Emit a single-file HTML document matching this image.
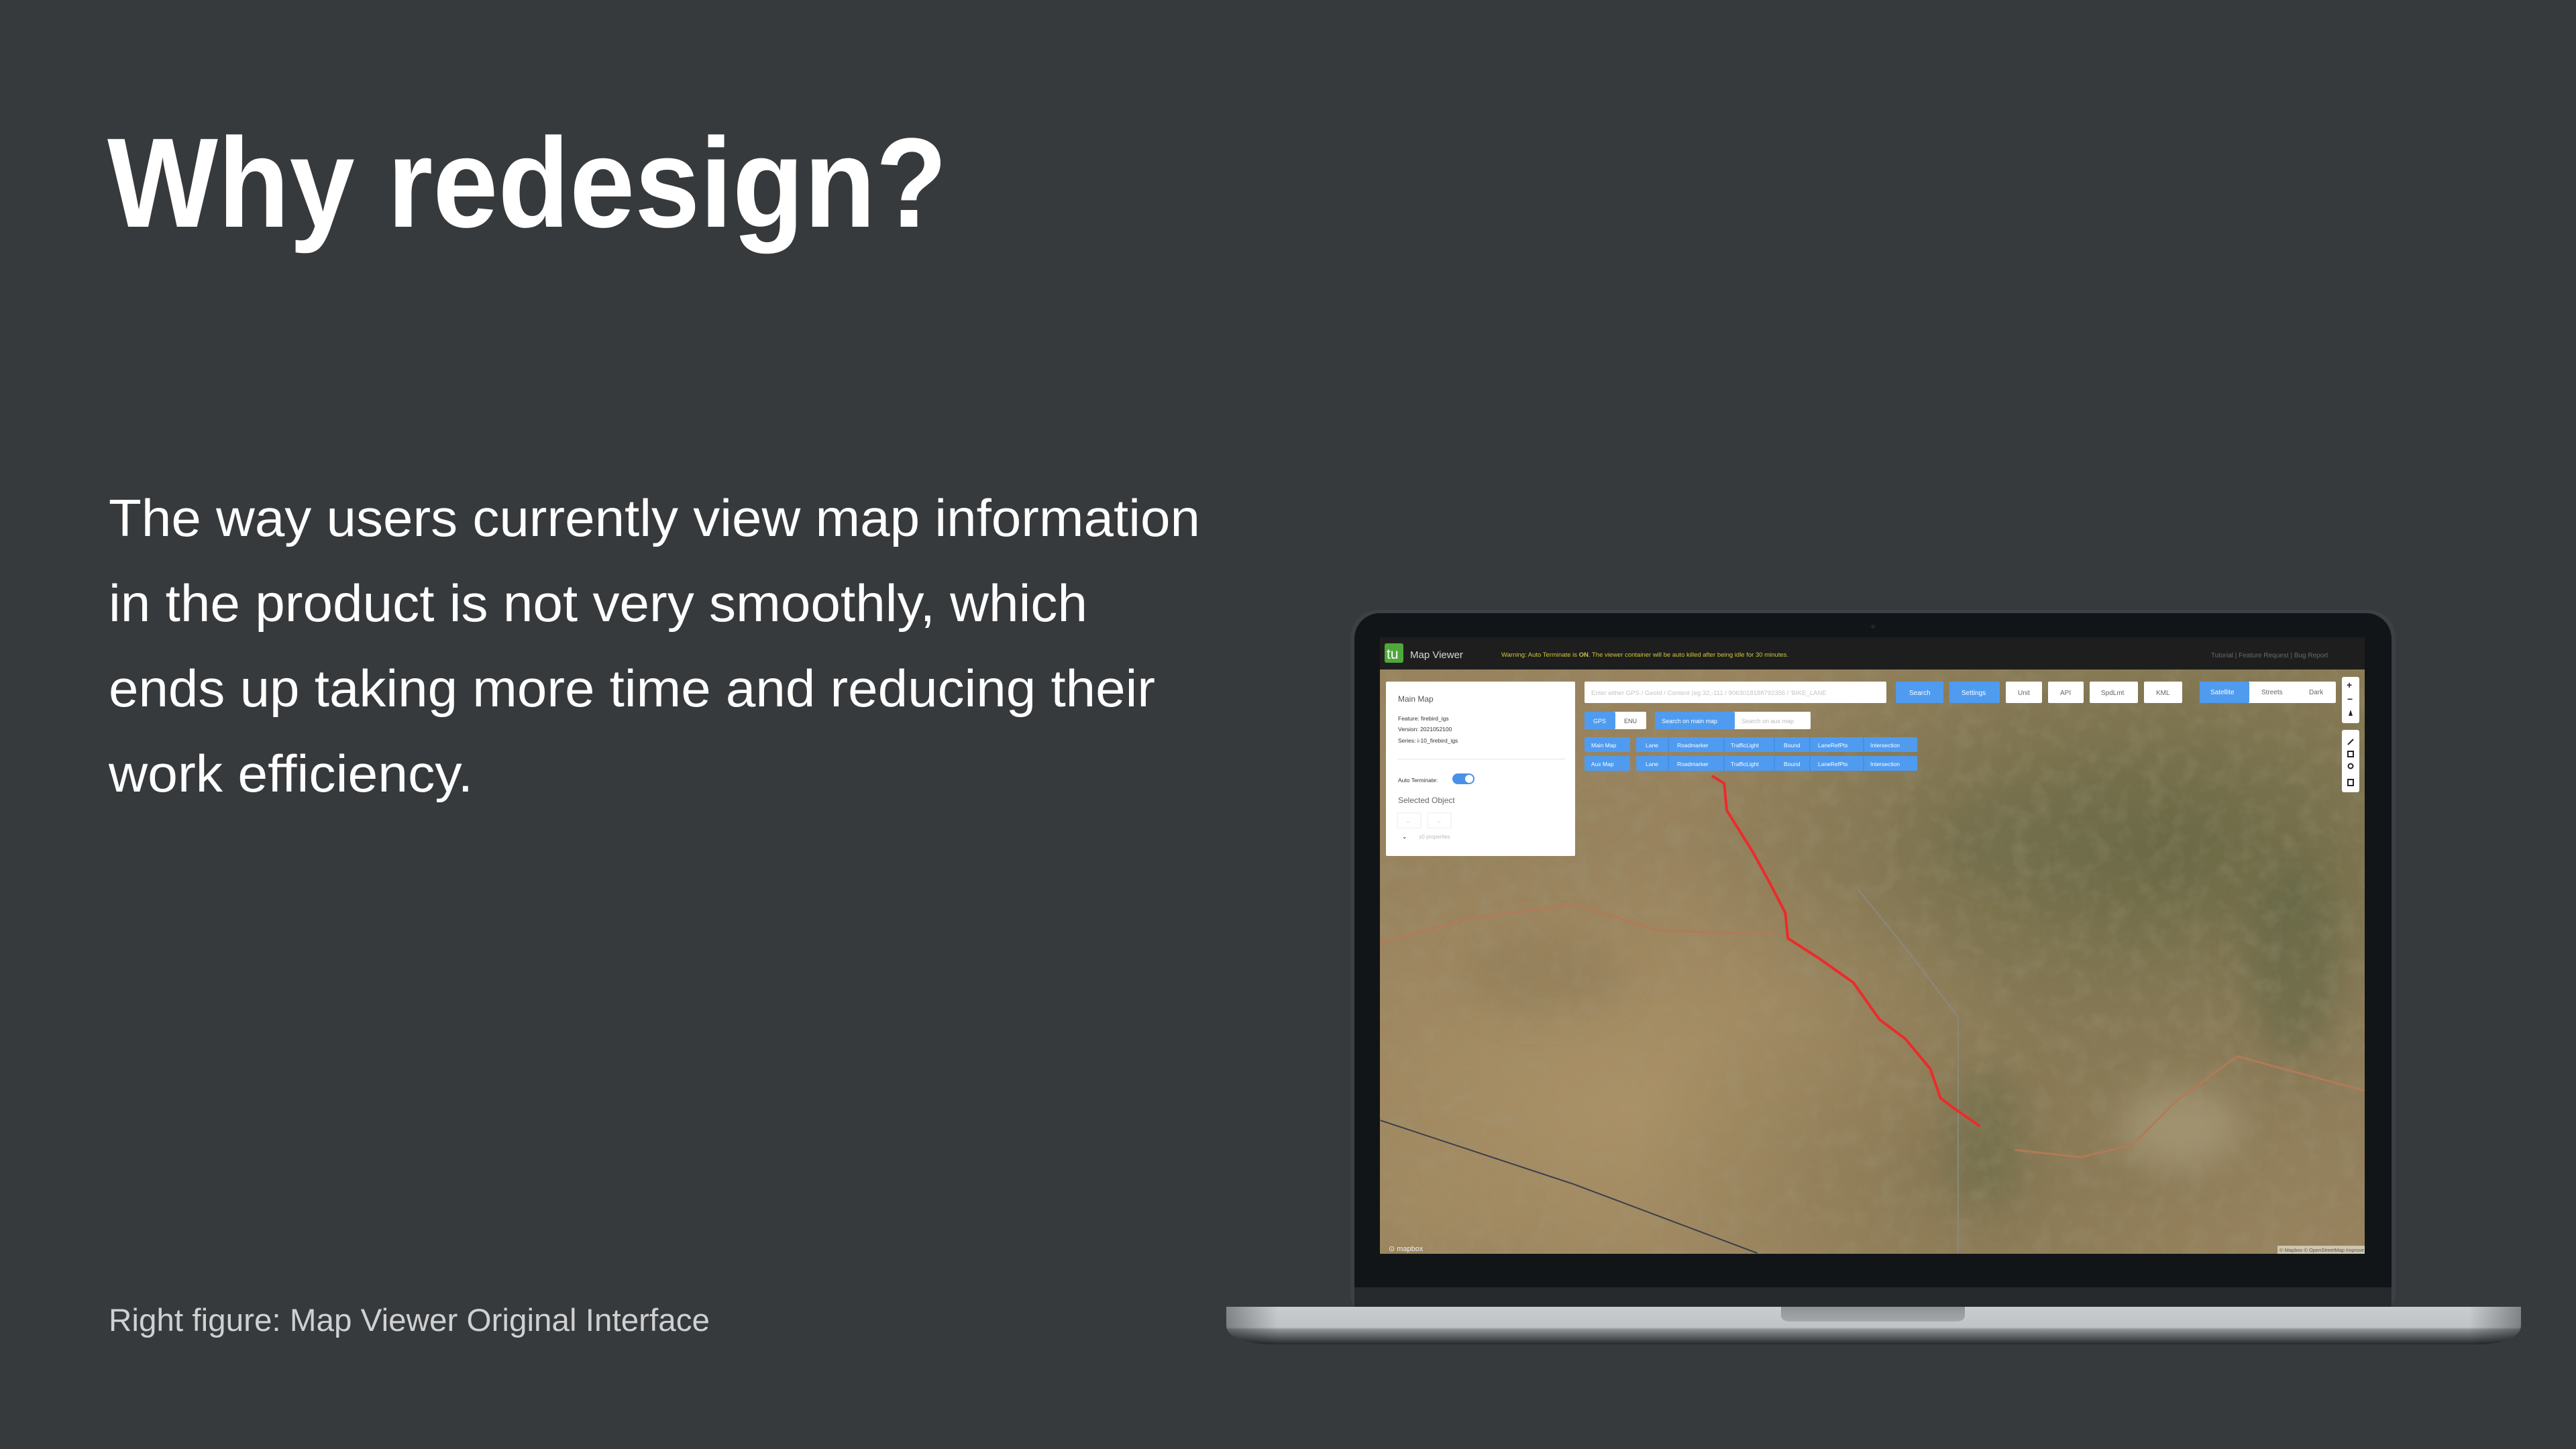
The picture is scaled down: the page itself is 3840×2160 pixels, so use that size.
<!DOCTYPE html>
<html><head><meta charset="utf-8"><style>
html,body{margin:0;padding:0;background:#373a3c;width:3840px;height:2160px;overflow:hidden}
svg{position:absolute;left:0;top:0}
</style></head><body>
<svg width="3840" height="2160" viewBox="0 0 3840 2160" xmlns="http://www.w3.org/2000/svg" font-family="'Liberation Sans', Arial, sans-serif">
<defs>
<linearGradient id="base" x1="0" y1="0" x2="0" y2="1">
<stop offset="0" stop-color="#c9cdd0"/><stop offset="0.55" stop-color="#bfc3c6"/><stop offset="0.6" stop-color="#8f9397"/><stop offset="1" stop-color="#26292c"/>
</linearGradient>
<linearGradient id="baseH" x1="0" y1="0" x2="1" y2="0">
<stop offset="0" stop-color="#000" stop-opacity="0.35"/><stop offset="0.04" stop-color="#000" stop-opacity="0"/><stop offset="0.96" stop-color="#000" stop-opacity="0"/><stop offset="1" stop-color="#000" stop-opacity="0.35"/>
</linearGradient>
<linearGradient id="notch" x1="0" y1="0" x2="0" y2="1"><stop offset="0" stop-color="#8e9296"/><stop offset="1" stop-color="#a4a8ab"/></linearGradient>
<radialGradient id="g1" cx="0.8" cy="0.3" r="0.5"><stop offset="0" stop-color="#5f6340" stop-opacity="0.8"/><stop offset="1" stop-color="#5f6340" stop-opacity="0"/></radialGradient>
<radialGradient id="g2" cx="0.25" cy="0.75" r="0.45"><stop offset="0" stop-color="#b3976a" stop-opacity="0.7"/><stop offset="1" stop-color="#b3976a" stop-opacity="0"/></radialGradient>
<radialGradient id="g3" cx="0.6" cy="0.85" r="0.35"><stop offset="0" stop-color="#7a6f4c" stop-opacity="0.6"/><stop offset="1" stop-color="#7a6f4c" stop-opacity="0"/></radialGradient>
<radialGradient id="g4" cx="0.95" cy="0.7" r="0.3"><stop offset="0" stop-color="#8a7a58" stop-opacity="0.7"/><stop offset="1" stop-color="#8a7a58" stop-opacity="0"/></radialGradient>
<filter id="blur" x="-50%" y="-50%" width="200%" height="200%"><feGaussianBlur stdDeviation="25"/></filter>
<filter id="noise" x="0" y="0" width="100%" height="100%">
<feTurbulence type="fractalNoise" baseFrequency="0.035" numOctaves="3" seed="4"/>
<feColorMatrix type="matrix" values="0 0 0 0 0.35  0 0 0 0 0.32  0 0 0 0 0.2  0 0 0 -1.6 0.95"/>
</filter>
<clipPath id="scr"><rect x="2057" y="998" width="1468" height="871"/></clipPath>
</defs>

<text x="160" y="338" font-size="190" font-weight="bold" fill="#ffffff" textLength="1252" lengthAdjust="spacingAndGlyphs">Why redesign?</text>
<g fill="#ffffff" font-size="78">
<text x="162" y="799" textLength="1627" lengthAdjust="spacingAndGlyphs">The way users currently view map information</text>
<text x="162" y="926" textLength="1459" lengthAdjust="spacingAndGlyphs">in the product is not very smoothly, which</text>
<text x="162" y="1053" textLength="1560" lengthAdjust="spacingAndGlyphs">ends up taking more time and reducing their</text>
<text x="162" y="1180" textLength="543" lengthAdjust="spacingAndGlyphs">work efficiency.</text>
</g>
<text x="162" y="1984" font-size="47" fill="#cfd0d1" textLength="896" lengthAdjust="spacingAndGlyphs">Right figure: Map Viewer Original Interface</text>

<rect x="2013" y="909" width="1558" height="1060" rx="42" fill="#3b4146"/>
<rect x="2019" y="914" width="1546" height="1050" rx="38" fill="#111517"/>
<rect x="2019" y="1919" width="1546" height="32" fill="#262a2d"/>
<circle cx="2792" cy="934" r="3" fill="#222628"/>

<path d="M1828 1948 H3758 V1975 Q3758 2000 3700 2004 H1890 Q1828 2000 1828 1975 Z" fill="url(#base)"/>
<path d="M1828 1948 H3758 V1975 Q3758 2000 3700 2004 H1890 Q1828 2000 1828 1975 Z" fill="url(#baseH)"/>
<path d="M2655 1948 H2929 V1960 Q2929 1970 2915 1970 H2669 Q2655 1970 2655 1960 Z" fill="url(#notch)"/>

<rect x="2057" y="950" width="1468" height="48" fill="#1e1e1f"/>
<rect x="2064" y="959" width="28" height="29" rx="3" fill="#4fa83a"/>
<text x="2067" y="982" font-size="21" fill="#fff">tu</text>
<text x="2102" y="981" font-size="15" fill="#d8d8d8">Map Viewer</text>
<text x="2238" y="979" font-size="9.5" fill="#c9c83c">Warning: Auto Terminate is <tspan font-weight="bold">ON</tspan>. The viewer container will be auto killed after being idle for 30 minutes.</text>
<text x="3296" y="980" font-size="10" fill="#6a6a6a">Tutorial  |  Feature Request  |  Bug Report</text>

<g clip-path="url(#scr)">
<rect x="2057" y="998" width="1468" height="871" fill="#98835e"/>
<rect x="2057" y="998" width="1468" height="871" fill="url(#g1)"/>
<rect x="2057" y="998" width="1468" height="871" fill="url(#g2)"/>
<rect x="2057" y="998" width="1468" height="871" fill="url(#g3)"/>
<rect x="2057" y="998" width="1468" height="871" fill="url(#g4)"/>
<g filter="url(#blur)">
<ellipse cx="3040" cy="1250" rx="160" ry="70" fill="#6e6c4a" opacity="0.5"/>
<ellipse cx="3420" cy="1430" rx="70" ry="150" fill="#5d6140" opacity="0.5"/>
<ellipse cx="2960" cy="1700" rx="60" ry="110" fill="#686b48" opacity="0.5"/>
<ellipse cx="2300" cy="1450" rx="120" ry="60" fill="#8e7a57" opacity="0.5"/>
<ellipse cx="2150" cy="1780" rx="100" ry="60" fill="#a48c63" opacity="0.6"/>
<ellipse cx="3250" cy="1680" rx="90" ry="60" fill="#b4a888" opacity="0.5"/>
</g>
<rect x="2057" y="998" width="1468" height="871" filter="url(#noise)" opacity="0.35"/>
<g transform="translate(1800,900) scale(1.301,0.7334)" fill="none">
<path d="M198 690 L300 640 L420 612 L520 665 L650 670" stroke="#b27a57" stroke-width="3" vector-effect="non-scaling-stroke"/>
<path d="M925 1110 L1000 1125 L1060 1100 L1110 1010 L1180 920 L1326 990" stroke="#b27a57" stroke-width="3" vector-effect="non-scaling-stroke"/>
<path d="M198 1050 L420 1180 L630 1320" stroke="#3a3f48" stroke-width="2" vector-effect="non-scaling-stroke"/>
<path d="M745 580 L800 700 L860 840 L860 1320" stroke="#8a8880" stroke-width="2" vector-effect="non-scaling-stroke"/>
<path d="M578 350 L592 365 L595 420 L625 505 L645 570 L662 628 L665 680 L700 720 L740 770 L770 845 L800 885 L828 945 L840 1005 L855 1025 L885 1062" stroke="#ec2b2b" stroke-width="4" vector-effect="non-scaling-stroke"/>
</g>
<rect x="3395" y="1857" width="130" height="12" fill="#e8e2d0" opacity="0.7"/>
<text x="3398" y="1866" font-size="7.5" fill="#555">© Mapbox © OpenStreetMap Improve this map © Maxar</text>
<text x="2070" y="1865" font-size="11" fill="#eee">⊙ mapbox</text>
</g>

<rect x="2066" y="1016" width="282" height="260" rx="2" fill="#fff"/>
<text x="2084" y="1046" font-size="12" fill="#555">Main Map</text>
<g font-size="8.5" fill="#333">
<text x="2084" y="1074">Feature: firebird_igs</text>
<text x="2084" y="1090">Version: 2021052100</text>
<text x="2084" y="1107">Series: i-10_firebird_igs</text>
<text x="2084" y="1166">Auto Terminate:</text>
</g>
<rect x="2083" y="1131" width="250" height="1" fill="#e6e6e6"/>
<rect x="2165" y="1153" width="33" height="16" rx="8" fill="#4a90e8"/>
<circle cx="2190" cy="1161" r="6" fill="#fff"/>
<text x="2084" y="1197" font-size="12" fill="#666">Selected Object</text>
<rect x="2083" y="1212" width="35" height="22" fill="#fff" stroke="#eee"/>
<rect x="2128" y="1212" width="35" height="22" fill="#fff" stroke="#eee"/>
<text x="2095" y="1227" font-size="9" fill="#ccc">←</text><text x="2140" y="1227" font-size="9" fill="#ccc">→</text>
<text x="2090" y="1250" font-size="9" fill="#222">⌄</text>
<text x="2115" y="1250" font-size="8" fill="#bbb">±0 properties</text>

<rect x="2362" y="1016" width="450" height="32" rx="2" fill="#fff"/>
<text x="2372" y="1036" font-size="9.5" fill="#c4c4c4">Enter either GPS / GeoId / Content (eg 32,-111 / 9063018188792356 / 'BIKE_LANE</text>
<g font-size="10" fill="#fff">
<rect x="2826" y="1016" width="71" height="32" rx="2" fill="#4f9bf0"/><text x="2846" y="1036">Search</text>
<rect x="2906" y="1016" width="75" height="32" rx="2" fill="#4f9bf0"/><text x="2924" y="1036">Settings</text>
</g>
<g font-size="10" fill="#666">
<rect x="2990" y="1016" width="54" height="32" rx="2" fill="#fff"/><text x="3008" y="1036">Unit</text>
<rect x="3053" y="1016" width="53" height="32" rx="2" fill="#fff"/><text x="3071" y="1036">API</text>
<rect x="3115" y="1016" width="72" height="32" rx="2" fill="#fff"/><text x="3132" y="1036">SpdLmt</text>
<rect x="3196" y="1016" width="57" height="32" rx="2" fill="#fff"/><text x="3214" y="1036">KML</text>
<rect x="3279" y="1016" width="203" height="32" rx="2" fill="#fff"/>
<rect x="3279" y="1016" width="74" height="32" rx="2" fill="#4f9bf0"/>
<text x="3295" y="1035" fill="#fff">Satellite</text><text x="3371" y="1035">Streets</text><text x="3442" y="1035">Dark</text>
</g>
<rect x="3491" y="1009" width="26" height="69" rx="3" fill="#fff"/>
<rect x="3491" y="1088" width="26" height="93" rx="3" fill="#fff"/>
<g font-size="14" fill="#222" font-weight="bold"><text x="3498" y="1026">+</text><text x="3499" y="1047">−</text></g>
<path d="M3504 1058 l-3 9 h6 z" fill="#222"/>
<g stroke="#222" stroke-width="2" fill="none">
<path d="M3500 1110 l8 -8"/><rect x="3500" y="1120" width="8" height="8"/><circle cx="3504" cy="1142" r="3.5"/><rect x="3500" y="1162" width="8" height="9"/>
</g>

<g font-size="9">
<rect x="2362" y="1061" width="92" height="26" rx="2" fill="#fff"/>
<rect x="2362" y="1061" width="46" height="26" rx="2" fill="#4f9bf0"/>
<text x="2375" y="1078" fill="#fff">GPS</text><text x="2421" y="1078" fill="#555">ENU</text>
<rect x="2467" y="1061" width="232" height="26" rx="2" fill="#fff"/>
<rect x="2467" y="1061" width="119" height="26" rx="2" fill="#4f9bf0"/>
<text x="2477" y="1078" fill="#fff">Search on main map</text><text x="2596" y="1078" fill="#bbb">Search on aux map</text>
</g>
<g font-size="8.5" fill="#fff">
<rect x="2362" y="1099" width="68" height="22" rx="2" fill="#4f9bf0"/>
<rect x="2439" y="1099" width="419" height="22" rx="2" fill="#4f9bf0"/>
<rect x="2362" y="1127" width="68" height="22" rx="2" fill="#4f9bf0"/>
<rect x="2439" y="1127" width="419" height="22" rx="2" fill="#4f9bf0"/>
<g stroke="#3a85da" stroke-width="1">
<path d="M2487 1099v22M2570 1099v22M2645 1099v22M2698 1099v22M2778 1099v22M2487 1127v22M2570 1127v22M2645 1127v22M2698 1127v22M2778 1127v22"/>
</g>
<text x="2372" y="1114">Main Map</text><text x="2372" y="1142">Aux Map</text>
<text x="2453" y="1114">Lane</text><text x="2500" y="1114">Roadmarker</text><text x="2580" y="1114">TrafficLight</text><text x="2659" y="1114">Bound</text><text x="2710" y="1114">LaneRefPts</text><text x="2788" y="1114">Intersection</text>
<text x="2453" y="1142">Lane</text><text x="2500" y="1142">Roadmarker</text><text x="2580" y="1142">TrafficLight</text><text x="2659" y="1142">Bound</text><text x="2710" y="1142">LaneRefPts</text><text x="2788" y="1142">Intersection</text>
</g>
</svg>
</body></html>
